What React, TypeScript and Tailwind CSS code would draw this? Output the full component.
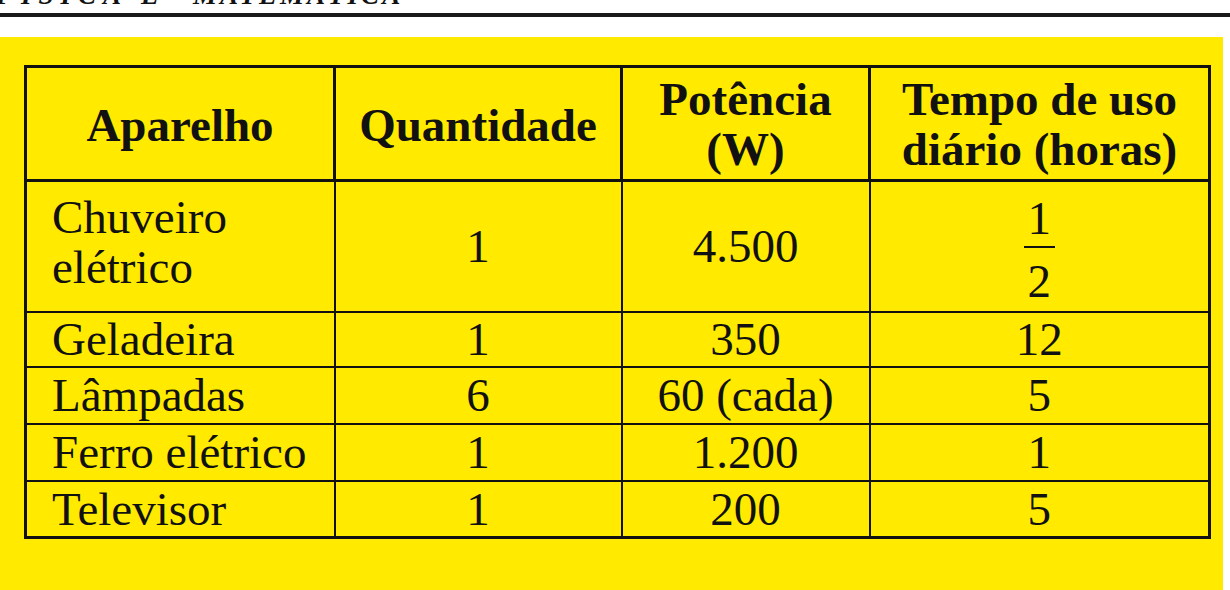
import React from "react";

function Fraction() {
  return (
    <div className="inline-flex flex-col items-center pt-[6px]">
      <span className="h-[44px] leading-[44px]">1</span>
      <span className="mt-[6px] block h-[2px] w-[31px] bg-[#111]" />
      <span className="mt-[11px] h-[44px] leading-[44px]">2</span>
    </div>
  );
}

export default function App() {
  const body = [
    { name: "Geladeira", qtd: "1", pot: "350", tempo: "12", h: "h-[55px]" },
    { name: "Lâmpadas", qtd: "6", pot: "60 (cada)", tempo: "5", h: "h-[57px]" },
    { name: "Ferro elétrico", qtd: "1", pot: "1.200", tempo: "1", h: "h-[57px]" },
    { name: "Televisor", qtd: "1", pot: "200", tempo: "5", h: "h-[57px]" },
  ];
  return (
    <div className="flex h-[590px] w-[1230px] flex-col overflow-hidden bg-white font-['Liberation_Serif',serif] text-[#111]">
      {/* title, cut off at the top edge as in the scan */}
      <div className="h-[7px] overflow-hidden">
        <div className="-mt-[21px] ml-[-4px] flex h-[32px] items-baseline text-[27px] leading-[32px] font-bold italic whitespace-nowrap">
          <span className="tracking-[7px]">FÍSICA</span>
          <span className="ml-[13px]">E</span>
          <span className="ml-[34px] tracking-[3px]">MATEMÁTICA</span>
        </div>
      </div>
      <div className="mt-[6px] h-[4px] w-full bg-[#1a1a1a]" />
      <div className="mt-[20px] w-[1223px] flex-1 bg-[#ffea00] pl-[24px] pt-[28px]">
        <table className="w-[1184px] table-fixed border-collapse border-[3px] border-[#111] text-[47px] leading-[52px]">
          <colgroup>
            <col className="w-[309px]" />
            <col className="w-[287px]" />
            <col className="w-[248px]" />
            <col className="w-[340px]" />
          </colgroup>
          <thead>
            <tr className="h-[114px] font-bold leading-[50px]">
              <th className="border-[3px] border-[#111] p-0 pt-[2px] text-center align-middle font-bold">Aparelho</th>
              <th className="border-[3px] border-[#111] p-0 pt-[2px] text-center align-middle font-bold">Quantidade</th>
              <th className="border-[3px] border-[#111] p-0 text-center align-middle font-bold">
                Potência
                <br />
                (W)
              </th>
              <th className="border-[3px] border-l-2 border-[#111] p-0 text-center align-middle font-bold">
                Tempo de uso
                <br />
                diário (horas)
              </th>
            </tr>
          </thead>
          <tbody>
            <tr className="h-[131px]">
              <td className="border-2 border-l-[3px] border-[#111] p-0 pb-[8px] pl-[25px] text-left align-middle leading-[50px]">
                Chuveiro
                <br />
                elétrico
              </td>
              <td className="border-2 border-[#111] p-0 text-center align-middle">1</td>
              <td className="border-2 border-[#111] p-0 text-center align-middle">4.500</td>
              <td className="border-2 border-l border-[#111] p-0 text-center align-middle">
                <Fraction />
              </td>
            </tr>
            {body.map((r) => (
              <tr key={r.name} className={r.h}>
                <td className="border-2 border-l-[3px] border-[#111] p-0 pl-[25px] text-left align-middle whitespace-nowrap">
                  {r.name}
                </td>
                <td className="border-2 border-[#111] p-0 text-center align-middle">{r.qtd}</td>
                <td className="border-2 border-[#111] p-0 text-center align-middle whitespace-nowrap">{r.pot}</td>
                <td className="border-2 border-l border-[#111] p-0 text-center align-middle">{r.tempo}</td>
              </tr>
            ))}
          </tbody>
        </table>
      </div>
    </div>
  );
}
